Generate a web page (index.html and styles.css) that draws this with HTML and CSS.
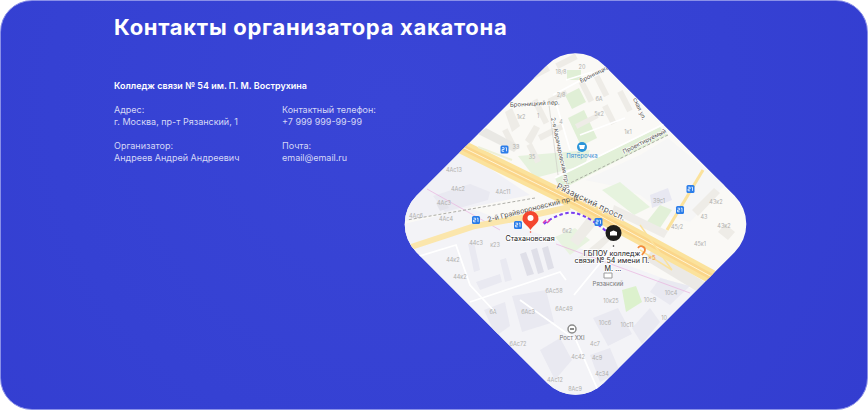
FILE: index.html
```html
<!DOCTYPE html>
<html>
<head>
    <title>Контакты организатора хакатона</title>
    <link rel="stylesheet" href="styles.css">
</head>
<body>
    <div class="panel">
        <div class="info">
            <h2>Контакты организатора хакатона</h2>
            <div class="college">Колледж связи № 54 им. П. М. Вострухина</div>
            <div class="contacts">
                <div>Адрес:<br>г. Москва, пр-т Рязанский, 1</div>
                <div>Контактный телефон:<br>+7 999 999-99-99</div>
                <div>Организатор:<br>Андреев Андрей Андреевич</div>
                <div>Почта:<br>email@email.ru</div>
            </div>
        </div>

        <svg class="map" viewBox="400 49 350 350">
            <defs>
                <clipPath id="diamond">
                    <rect x="443" y="91.5" width="265" height="265" rx="40" transform="rotate(45 575.5 224)"/>
                </clipPath>
                <g id="bus">
                    <rect x="-4" y="-4" width="8" height="8" rx="1.5" fill="#2b7de9"/>
                    <path d="M-2.4 -1.8h2v1.8h-2v1.8h2M1 -1.8h1v3.6" fill="none" stroke="#fff" stroke-width=".8"/>
                </g>
            </defs>
            <g clip-path="url(#diamond)">
                <rect x="400" y="49" width="350" height="350" fill="#faf9f6"/>

                <!-- industrial area -->
                <path d="M400 225 L470 208 L555 240 L600 255 L700 292 L600 400 L400 400Z" fill="#f3f3f7"/>
                <path d="M640 155 L668 138 L725 185 L690 222 L668 216 L640 195 L610 185 L585 180Z" fill="#f6f6f6"/>
                <path d="M462 150 L400 205 L400 222 L530 195Z" fill="#f1f1f6"/>

                <!-- greens -->
                <path d="M555 178 L660 127 L668 135 L560 190Z" fill="#e2f0d8"/>
                <path d="M518 156 L590 150 L585 165 L535 178Z" fill="#e6f2de"/>
                <path d="M567 70h14v10h-14zM565 95l14 -7 7 14 -14 7zM568 118l16 -8 13 28 -16 8z" fill="#e0efd6"/>
                <path d="M602 190 L620 182 L650 207 L634 215Z" fill="#e6f3de"/>
                <path d="M660 205 L672 210 L660 228 L645 224Z" fill="#e2f0d8"/>
                <path d="M622 290 L636 286 L642 302 L626 312Z" fill="#dcf1cd"/>
                <path d="M555 237 L575 228 L590 240 L570 255Z" fill="#e8f3e0"/>

                <!-- buildings -->
                <g fill="#eeece7">
                    <g transform="rotate(-27 570 110)">
                        <rect x="552" y="60" width="18" height="6"/>
                        <rect x="578" y="62" width="22" height="6"/>
                        <rect x="590" y="90" width="6" height="22"/>
                        <rect x="540" y="85" width="6" height="26"/>
                        <rect x="555" y="90" width="20" height="5"/>
                        <rect x="606" y="92" width="6" height="22"/>
                        <rect x="530" y="118" width="26" height="6"/>
                        <rect x="568" y="125" width="24" height="5"/>
                        <rect x="600" y="122" width="6" height="20"/>
                        <rect x="500" y="98" width="6" height="22"/>
                        <rect x="515" y="122" width="6" height="20"/>
                        <rect x="620" y="116" width="6" height="22"/>
                    </g>
                    <path d="M505 112 L512 108 L520 126 L512 132Z"/>
                    <path d="M525 140 L534 125 L540 128 L531 145Z"/>
                    <path d="M478 134 L486 128 L520 146 L514 152Z" fill="#e9e8e4"/>
                    <path d="M614 205 L668 231 L664 238 L612 213Z" fill="#eeece8"/>
                    <path d="M652 250 L705 282 L698 292 L645 260Z" fill="#ebe9e5"/>
                    <path d="M692 210 L714 188 L720 193 L698 216Z"/>
                    <path d="M725 224 L735 232 L728 240 L718 232Z"/>
                    <path d="M570 240 L590 214 L598 222 L578 246Z"/>
                    <path d="M578 258 L606 235 L610 240 L584 265Z"/>
                </g>
                <path d="M650 195 L668 188 L672 200 L652 208Z" fill="#e8e8f2"/>
                <g fill="#e9e9f1">
                    <path d="M433 196 L470 184 L490 192 L488 200 L445 212Z"/>
                    <path d="M436 203 L445 200 L449 208 L440 211Z" fill="#e3e3ea"/>
                    <path d="M468 244 L474 242 L480 270 L474 272Z"/>
                    <path d="M500 260 L506 258 L512 280 L505 282Z"/>
                    <path d="M476 282 L500 274 L502 282 L480 290Z"/>
                    <path d="M520 254 L526 252 L534 274 L527 276Z" fill="#dfdfe8"/>
                    <path d="M531 250 L537 248 L544 272 L538 274Z" fill="#dfdfe8"/>
                    <path d="M542 248 L548 246 L554 268 L548 270Z" fill="#dfdfe8"/>
                    <path d="M512 296 L546 290 L554 322 L522 332Z"/>
                    <path d="M484 310 L505 302 L510 326 L496 336Z"/>
                    <path d="M540 350 L560 338 L572 360 L555 380Z"/>
                    <path d="M593 318 L618 308 L632 334 L608 346Z"/>
                    <path d="M632 328 L650 308 L660 322 L642 344Z"/>
                    <path d="M590 355 L610 348 L620 372 L600 382Z"/>
                    <path d="M660 278 L690 286 L670 305 L650 292Z"/>
                </g>

                <!-- small roads -->
                <g fill="none" stroke="#fff" stroke-width="1.8">
                    <path d="M555 178 L668 122"/>
                    <path d="M400 262 L456 245 L470 285 L495 312"/>
                    <path d="M470 302 L560 272 L566 280"/>
                    <path d="M566 80 L592 72 M553 95 L600 70 M580 135 L625 118 M555 100 L570 150"/>
                    <path d="M574 295 L615 245 M520 300 L576 340 L600 395"/>
                </g>
                <path d="M549 105 L558 175" fill="none" stroke="#c9c7c2" stroke-width=".6"/>

                <!-- pink line and railway -->
                <path d="M427 189 L500 230 M556 244 L690 293" fill="none" stroke="#eab3df" stroke-width=".7"/>
                <path d="M668 135 L560 188 M535 198 L407 220" fill="none" stroke="#9a9a94" stroke-width=".8" stroke-dasharray="3 2"/>

                <!-- main roads -->
                <g fill="none">
                    <path d="M462 147 L580 205 L712 277" stroke="#fbe29c" stroke-width="14"/>
                    <path d="M462 147 L580 205 L712 277" stroke="#fbd68a" stroke-width="6"/>
                    <path d="M462 147 L580 205 L712 277" stroke="#fff3d2" stroke-width="1"/>
                    <path d="M640 225 L672 270 M640 250 L672 270" stroke="#fbe29c" stroke-width="1.5"/>
                    <path d="M408 248 L475 226 L520 218 L570 207" stroke="#fbe6ac" stroke-width="6"/>
                    <path d="M703 170 L667 230" stroke="#fbe29c" stroke-width="3"/>
                    <path d="M478 147 L512 160" stroke="#edf0d8" stroke-width="2"/>
                </g>

                <!-- route -->
                <path d="M544 224 Q553 216 567 213 T606 231" fill="none" stroke="#7a3ff0" stroke-width="2" stroke-dasharray="3.5 2.5"/>
                <path d="M543 223l3 -3M547 223l3 -3" stroke="#e23bb0" stroke-width="1.5"/>

                <!-- labels -->
                <g class="num">
                    <text x="561" y="74">18/8</text><text x="582" y="69">20</text>
                    <text x="561" y="97">2/8</text><text x="599" y="101">6А</text>
                    <text x="599" y="116">5к2</text><text x="561" y="124">4</text>
                    <text x="628" y="134">1к1</text><text x="521" y="119">1к2</text><text x="538" y="118">1</text>
                    <text x="516" y="149">33</text><text x="532" y="159">35</text>
                    <text x="454" y="172">4Ас13</text><text x="458" y="191">4Ас2</text><text x="503" y="194">4Ас11</text>
                    <text x="444" y="205">4Ас3</text><text x="416" y="218">4Ас6</text><text x="446" y="221">4Ас4</text>
                    <text x="476" y="245">44с3</text><text x="495" y="247">к23</text><text x="453" y="262">44к2</text><text x="460" y="279">44к2</text>
                    <text x="554" y="293">6Ас58</text><text x="564" y="311">6Ас49</text><text x="493" y="314">6А</text><text x="528" y="314">6Ас3</text>
                    <text x="518" y="346">6Ас72</text><text x="555" y="382">4Ас12</text><text x="575" y="391">8Ас9</text>
                    <text x="567" y="233">6к2</text><text x="659" y="203">39с1</text><text x="677" y="229">45/2</text>
                    <text x="716" y="204">43к2</text><text x="704" y="219">43</text><text x="724" y="228">43к2</text><text x="700" y="246">45к1</text>
                    <text x="611" y="303">10к25</text><text x="650" y="302">10с9</text><text x="671" y="295">10с4</text>
                    <text x="605" y="325">10с6</text><text x="627" y="327">10с11</text>
                    <text x="595" y="346">4с7</text><text x="578" y="359">4с42</text><text x="597" y="360">4с9</text><text x="602" y="376">4с34</text>
                    <text x="664" y="320">10</text>
                </g>
                <g class="street">
                    <text transform="translate(581 83) rotate(-27)">Бронницкая</text>
                    <text transform="translate(510 107) rotate(-3)">Бронницкий пер.</text>
                    <text transform="translate(551 118) rotate(78)">2-я Карачаровская пр-д</text>
                    <text transform="translate(633 99) rotate(66)">ская ул.</text>
                    <text transform="translate(624 154) rotate(-27)">Проектируемый</text>
                    <text class="big" transform="translate(556 188) rotate(26)">Рязанский просп.</text>
                    <text class="mid" transform="translate(488 222) rotate(-14)">2-й Грайвороновский пр-д</text>
                </g>
                <g class="poi">
                    <text x="608" y="286">Рязанский</text>
                    <text x="572" y="340">Рост XXI</text>
                </g>
                <path d="M604 273h8v5h-8z" fill="#fff" stroke="#9a9a9a" stroke-width="1"/>
                <circle cx="572" cy="329" r="4" fill="#fff" stroke="#8b8b8b" stroke-width="1.5"/>
                <rect x="570" y="328" width="4" height="2" fill="#8b8b8b"/>
                <text x="648" y="260" class="orange">×5</text>
                <path d="M638 248a3.8 3.8 0 0 1 7 2c0 2 -2 3 -3 5" fill="none" stroke="#f28a3c" stroke-width="1.8"/>

                <!-- bus stops -->
                <use href="#bus" x="504.5" y="149.5"/>
                <use href="#bus" x="476" y="220"/>
                <use href="#bus" x="518" y="225"/>
                <use href="#bus" x="598.5" y="222"/>
                <use href="#bus" x="680" y="210"/>
                <use href="#bus" x="690.5" y="189"/>

                <!-- pyaterochka -->
                <circle cx="582" cy="147" r="5" fill="#2b95d9"/>
                <path d="M579 145h6l-1 4h-4z" fill="#fff"/>
                <text x="582" y="158" class="shop">Пятёрочка</text>

                <!-- station pin -->
                <path d="M522.5 219 a8 8 0 1 1 16 0 c0 4 -5 6 -8 11 c-3 -5 -8 -7 -8 -11z" fill="#f4472e"/>
                <circle cx="530.5" cy="218" r="3" fill="#fff"/>
                <circle cx="530.5" cy="232" r=".8" fill="#f4472e"/>
                <text x="530" y="241" class="pin-label">Стахановская</text>

                <!-- college pin -->
                <circle cx="613.5" cy="233" r="8" fill="#1d1d1b"/>
                <path d="M610 232l3.5 -1.5 3.5 1.5v3.5h-7z" fill="#fff"/>
                <circle cx="613.5" cy="246" r=".8" fill="#222"/>
                <text class="pin-label">
                    <tspan x="613" y="255.5">ГБПОУ колледж</tspan>
                    <tspan x="613" y="263">связи № 54 имени П.</tspan>
                    <tspan x="613" y="270.5">М. ...</tspan>
                </text>
            </g>
        </svg>
    </div>
</body>
</html>
```

FILE: styles.css
```css
html, body {
    margin: 0;
    background-color: #fff;
}
.panel {
    display: flex;
    box-sizing: border-box;
    width: 868px;
    height: 410px;
    padding-left: 113px;
    border: 1px solid #8a90e8;
    border-radius: 32px;
    overflow: hidden;
    background: radial-gradient(circle at 45% 25%, #3945d6 0%, #3541d3 60%, #333dd0 100%);
}
.info {
    width: 286px;
    color: #fff;
    font-family: "Inter", "Noto Sans", sans-serif;
}
h2 {
    margin: 13px 0 0;
    font-size: 22px;
    line-height: 26px;
    font-weight: 700;
    letter-spacing: .7px;
    white-space: nowrap;
}
.college {
    margin-top: 40px;
    font-size: 9px;
    line-height: 11px;
    font-weight: 600;
}
.contacts {
    display: grid;
    grid-template-columns: 168px 1fr;
    row-gap: 13px;
    margin-top: 13px;
    font-size: 9px;
    line-height: 11.5px;
    color: #d5d8f6;
}
.map {
    flex: none;
    width: 350px;
    height: 350px;
    margin-top: 48px;
}
.map text {
    font-family: "Inter", "Noto Sans", sans-serif;
}
.num text {
    font-size: 5.5px;
    fill: #b0b0ad;
    text-anchor: middle;
}
.street text {
    font-size: 6px;
    fill: #55534f;
    stroke: #fff;
    stroke-width: 1.2px;
    paint-order: stroke;
}
.street .big {
    font-size: 8px;
    letter-spacing: .4px;
}
.street .mid {
    font-size: 7px;
    stroke: none;
}
.poi text {
    font-size: 6px;
    fill: #777;
    text-anchor: middle;
}
.orange {
    font-size: 6px;
    fill: #f28a3c;
}
.shop {
    font-size: 6px;
    fill: #3b8fd6;
    text-anchor: middle;
}
.pin-label {
    font-size: 7.2px;
    fill: #222;
    text-anchor: middle;
    stroke: #fff;
    stroke-width: 1.6px;
    paint-order: stroke;
}
```
